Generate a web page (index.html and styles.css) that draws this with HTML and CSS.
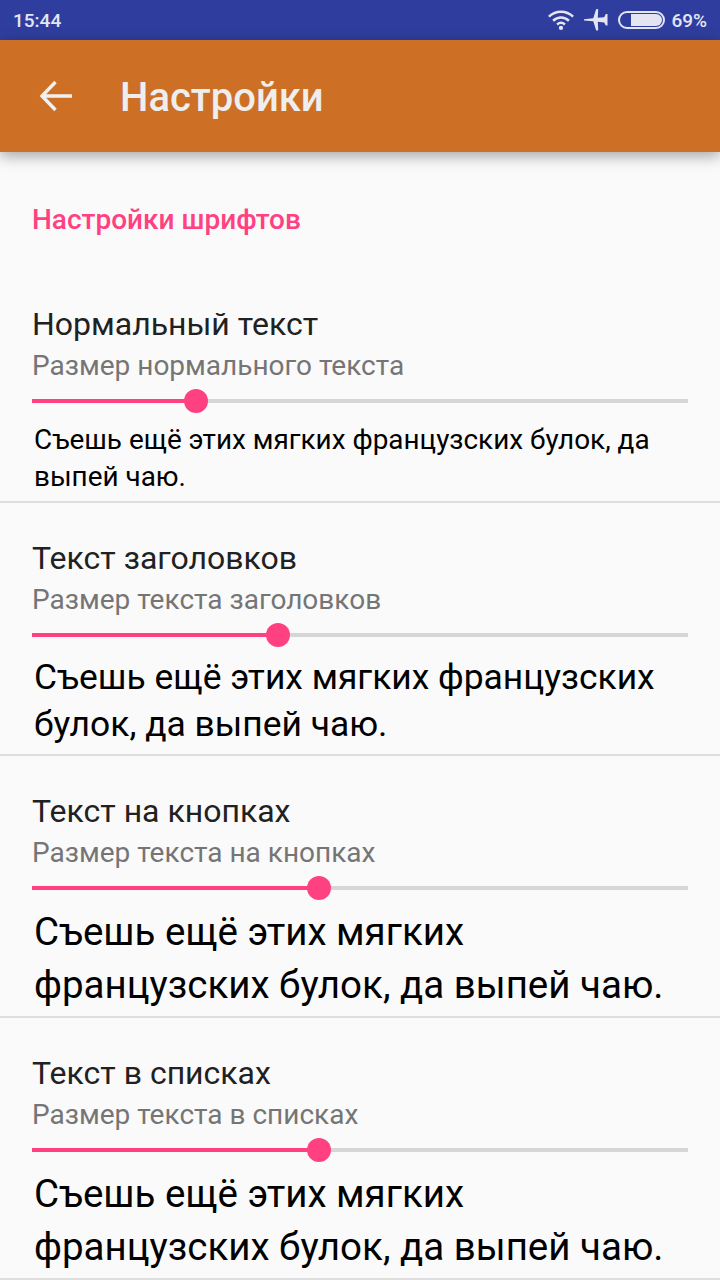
FILE: index.html
```html
<!DOCTYPE html>
<html lang="ru">

<head>
    <meta charset="UTF-8">
    <meta name="viewport" content="width=device-width, initial-scale=1.0">
    <title>Настройки</title>
    <link rel="stylesheet" href="styles.css">
</head>

<body>
    <div class="statusbar">
        <span class="time">15:44</span>
        <div class="status-icons">
            <svg class="ic-wifi" width="28" height="22" viewBox="0 0 30 22">
                <path d="M2 7.5C9.5 .5 20.500 .5 28 7.500" fill="none" stroke="#e3e5f3" stroke-width="2.600"/>
                <path d="M6.500 11.800C11.500 7.200 18.500 7.200 23.500 11.800" fill="none" stroke="#e3e5f3" stroke-width="2.600"/>
                <path d="M10.800 15.800C13.300 13.600 16.700 13.600 19.200 15.800" fill="none" stroke="#e3e5f3" stroke-width="2.600"/>
                <circle cx="15" cy="19.500" r="2.300" fill="#e3e5f3"/>
            </svg>
            <svg class="ic-plane" width="24" height="24" viewBox="0 0 24 24">
                <path d="M0 11.200L9.300 10.200L12 1.500C12.300 .8 14.400 .8 14.200 1.800L13.800 9.800L20.200 9.200L21.800 6H23.500V17.500H21.800L20.200 14.400L13.800 13.800L14.200 21.800C14.400 22.800 12.300 22.800 12 22L9.300 13.200L0 12.400Z" fill="#e3e5f3"/>
            </svg>
            <div class="battery">
                <div class="battery-level"></div>
            </div>
            <span class="percent">69%</span>
        </div>
    </div>

    <div class="toolbar">
        <svg class="back" width="34" height="32" viewBox="0 0 34 32">
            <path d="M33 16H3M16.500 2L3 16L16.500 30" fill="none" stroke="#f1f1f1" stroke-width="3.400"/>
        </svg>
        <h1>Настройки</h1>
    </div>

    <div class="category">Настройки шрифтов</div>

    <div class="pref normal">
        <div class="pref-title">Нормальный текст</div>
        <div class="pref-summary">Размер нормального текста</div>
        <div class="slider">
            <div class="slider-fill" style="width: 25%"></div>
            <div class="slider-thumb"></div>
            <div class="slider-rest"></div>
        </div>
        <p class="sample">Съешь ещё этих мягких французских булок, да выпей чаю.</p>
    </div>

    <div class="pref heading">
        <div class="pref-title">Текст заголовков</div>
        <div class="pref-summary">Размер текста заголовков</div>
        <div class="slider">
            <div class="slider-fill" style="width: 37.500%"></div>
            <div class="slider-thumb"></div>
            <div class="slider-rest"></div>
        </div>
        <p class="sample">Съешь ещё этих мягких французских булок, да выпей чаю.</p>
    </div>

    <div class="pref large">
        <div class="pref-title">Текст на кнопках</div>
        <div class="pref-summary">Размер текста на кнопках</div>
        <div class="slider">
            <div class="slider-fill" style="width: 43.750%"></div>
            <div class="slider-thumb"></div>
            <div class="slider-rest"></div>
        </div>
        <p class="sample">Съешь ещё этих мягких французских булок, да выпей чаю.</p>
    </div>

    <div class="pref large">
        <div class="pref-title">Текст в списках</div>
        <div class="pref-summary">Размер текста в списках</div>
        <div class="slider">
            <div class="slider-fill" style="width: 43.750%"></div>
            <div class="slider-thumb"></div>
            <div class="slider-rest"></div>
        </div>
        <p class="sample">Съешь ещё этих мягких французских булок, да выпей чаю.</p>
    </div>
</body>

</html>
```

FILE: styles.css
```css
* {
    margin: 0;
    padding: 0;
    box-sizing: border-box;
}

html,
body {
    height: 1280px;
    overflow: hidden;
}

body {
    background-color: #fafafa;
    font-family: Roboto, "Noto Sans", sans-serif;
}

.statusbar {
    height: 40px;
    background-color: #2f3e9e;
    color: #e3e5f3;
    display: flex;
    align-items: center;
    justify-content: space-between;
    padding: 0 13px 0 13px;
    font-size: 19px;
    font-weight: 500;
}

.status-icons {
    display: flex;
    align-items: center;
}

.ic-wifi {
    margin-right: 9px;
}

.ic-plane {
    margin-right: 10px;
}

.battery {
    width: 47px;
    height: 18px;
    border: 2px solid #e3e5f3;
    border-radius: 9px;
    padding: 1px;
    margin-right: 6px;
    display: flex;
    justify-content: flex-end;
}

.battery-level {
    width: 31px;
    background-color: #e3e5f3;
    border-radius: 0 7px 7px 0;
}

.toolbar {
    height: 112px;
    background-color: #cd7026;
    color: #eeeeee;
    display: flex;
    align-items: center;
    padding-left: 39px;
    box-shadow: 0 4px 14px rgba(0, 0, 0, 0.35);
}

.back {
    margin-right: 47px;
}

.toolbar h1 {
    font-size: 40px;
    font-weight: 500;
    padding-top: 2px;
}

.category {
    color: #ff4081;
    font-size: 28px;
    font-weight: 500;
    line-height: 32px;
    padding: 52px 32px 0;
    height: 152px;
}

.pref {
    border-bottom: 2px solid #dedede;
}

.pref-title {
    color: #212121;
    font-size: 32px;
    line-height: 40px;
    padding-left: 32px;
}

.pref-summary {
    color: #757575;
    font-size: 28px;
    line-height: 36px;
    padding-left: 32px;
    margin-top: 4px;
}

.slider {
    display: flex;
    align-items: center;
    height: 24px;
    margin: 5px 32px 0;
}

.slider-fill {
    height: 4px;
    background-color: #ff4081;
    margin-right: -12px;
}

.slider-thumb {
    flex: none;
    width: 24px;
    height: 24px;
    border-radius: 50%;
    background-color: #ff4081;
}

.slider-rest {
    flex: 1;
    height: 4px;
    background-color: #d6d6d6;
}

.sample {
    color: #000;
    padding-left: 34px;
    padding-right: 32px;
}

.normal .sample {
    font-size: 27.9px;
    line-height: 37px;
    margin-top: 8px;
    padding-bottom: 6px;
}

.heading {
    padding-top: 35px;
}

.heading .sample {
    font-size: 35.4px;
    line-height: 47px;
    margin-top: 7px;
    padding-bottom: 6px;
}

.large {
    padding-top: 35px;
}

.large .sample {
    font-size: 38.5px;
    line-height: 53px;
    margin-top: 5px;
    padding-bottom: 5px;
}
```
